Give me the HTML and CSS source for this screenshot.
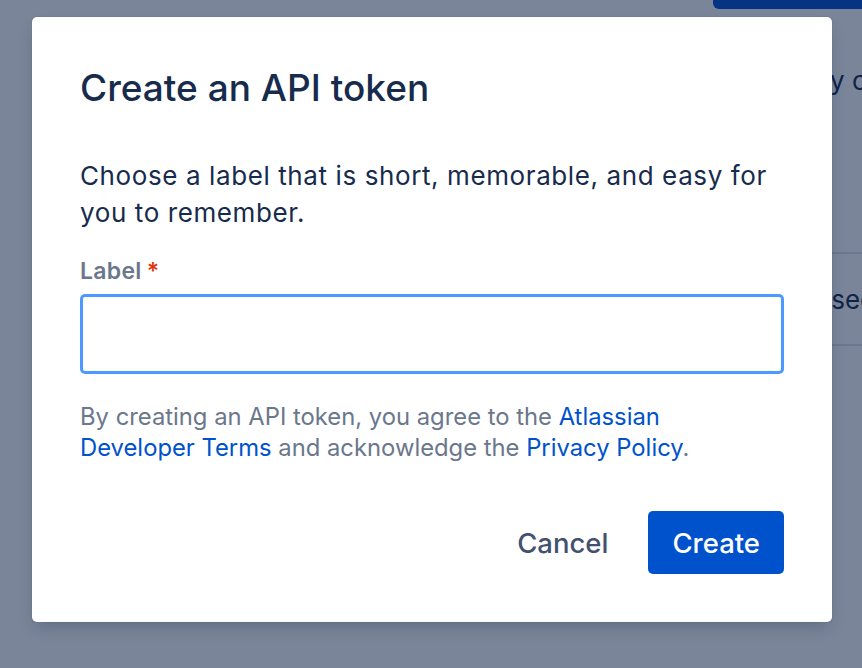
FILE: index.html
```html
<!DOCTYPE html>
<html lang="en">
<head>
<meta charset="utf-8">
<title>Create an API token</title>
<link rel="stylesheet" href="styles.css">
</head>
<body>
<div class="page">
  <div class="topbar"><span class="top-btn"></span></div>
  <p class="intro">y can expire</p>
  <div class="table">
    <div class="row head"></div>
    <div class="row"><span class="cell">Last used</span></div>
  </div>
</div>
<div class="blanket">
  <div class="modal" role="dialog">
    <h1 class="title">Create an API token</h1>
    <p class="desc">Choose a label that is short, memorable, and easy for you to remember.</p>
    <label class="field-label">Label<span class="req">*</span></label>
    <div class="input"></div>
    <p class="terms">By creating an API token, you agree to the <a href="#">Atlassian Developer Terms</a> and acknowledge the <a href="#">Privacy Policy</a>.</p>
    <div class="actions">
      <button class="btn btn-subtle">Cancel</button>
      <button class="btn btn-primary">Create</button>
    </div>
  </div>
</div>
</body>
</html>
```
FILE: styles.css
```css
html, body {
  margin: 0;
  padding: 0;
}
body {
  width: 862px;
  height: 668px;
  overflow: hidden;
  position: relative;
  background: #ffffff;
  font-family: Inter, "Noto Sans", "Liberation Sans", sans-serif;
  color: #172b4d;
}
.page {
  display: flex;
  flex-direction: column;
}
.topbar {
  display: flex;
  padding-left: 713px;
}
.top-btn {
  display: block;
  width: 200px;
  height: 9px;
  background: #0052cc;
  border-bottom-left-radius: 6px;
}
.intro {
  margin: 56px 0 0 830px;
  font-size: 26px;
  white-space: nowrap;
}
.table {
  margin-top: 112px;
  margin-left: 700px;
}
.row {
  height: 90px;
  border-bottom: 2px solid #dfe1e6;
  display: flex;
  align-items: center;
  font-size: 26px;
  white-space: nowrap;
}
.row.head {
  height: 44px;
}
.cell {
  margin-left: 57px;
}
.blanket {
  position: absolute;
  inset: 0;
  background: rgba(9, 30, 66, 0.54);
  display: flex;
  align-items: flex-start;
  padding: 17px 0 0 32px;
}
.modal {
  width: 800px;
  height: 605px;
  box-sizing: border-box;
  background: #ffffff;
  border-radius: 5px;
  box-shadow: 0 0 1px rgba(9, 30, 66, 0.31), 0 8px 16px -4px rgba(9, 30, 66, 0.25);
  padding: 48px 48px 0 48px;
  display: flex;
  flex-direction: column;
}
.title {
  margin: -1px 0 0 0;
  font-size: 37px;
  font-weight: 500;
  line-height: 48px;
  color: #172b4d;
}
.desc {
  margin: 45px 0 0 0;
  font-size: 26px;
  line-height: 37px;
  letter-spacing: 0.6px;
  color: #172b4d;
}
.field-label {
  margin-top: 26px;
  font-size: 23px;
  font-weight: 600;
  line-height: 28px;
  letter-spacing: 0.3px;
  color: #6b778c;
}
.req {
  color: #de350b;
  margin-left: 5px;
}
.input {
  margin-top: 9px;
  height: 80px;
  box-sizing: border-box;
  border: 3px solid #4c9aff;
  border-radius: 5px;
  background: #ffffff;
}
.terms {
  margin: 27px 0 0 0;
  max-width: 690px;
  font-size: 23.8px;
  line-height: 31px;
  color: #6b778c;
}
.terms a {
  color: #0052cc;
  text-decoration: none;
}
.actions {
  margin-top: 48px;
  display: flex;
  justify-content: flex-end;
  gap: 16px;
}
.btn {
  height: 63px;
  border: none;
  border-radius: 5px;
  font-family: inherit;
  font-size: 27.5px;
  font-weight: 500;
  padding: 0 24px;
  cursor: pointer;
}
.btn-subtle {
  background: transparent;
  color: #42526e;
}
.btn-primary {
  background: #0052cc;
  color: #ffffff;
}
```
